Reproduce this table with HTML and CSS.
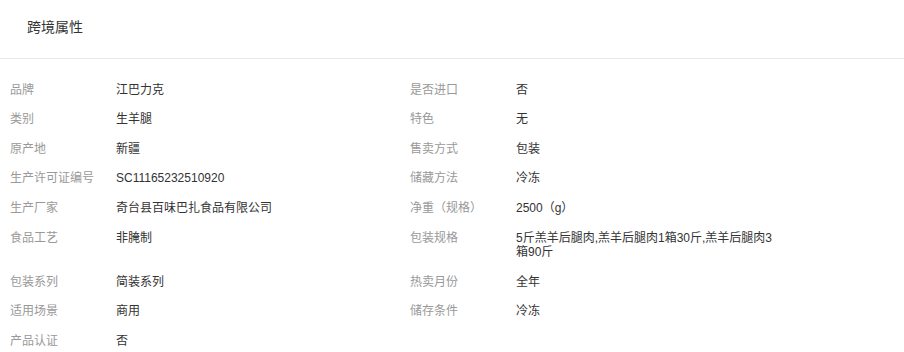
FILE: index.html
```html
<!DOCTYPE html>
<html lang="zh-CN">
<head>
    <meta charset="UTF-8">
    <meta name="viewport" content="width=device-width, initial-scale=1.0">
    <title>跨境属性</title>
    <link rel="stylesheet" href="styles.css">
</head>
<body>
    <div class="panel">
        <div class="panel-header">跨境属性</div>

        <div class="attr-list">
            <div class="attr-item"><span class="attr-label">品牌</span><span class="attr-value">江巴力克</span></div>
            <div class="attr-item"><span class="attr-label">是否进口</span><span class="attr-value">否</span></div>

            <div class="attr-item"><span class="attr-label">类别</span><span class="attr-value">生羊腿</span></div>
            <div class="attr-item"><span class="attr-label">特色</span><span class="attr-value">无</span></div>

            <div class="attr-item"><span class="attr-label">原产地</span><span class="attr-value">新疆</span></div>
            <div class="attr-item"><span class="attr-label">售卖方式</span><span class="attr-value">包装</span></div>

            <div class="attr-item"><span class="attr-label">生产许可证编号</span><span class="attr-value">SC11165232510920</span></div>
            <div class="attr-item"><span class="attr-label">储藏方法</span><span class="attr-value">冷冻</span></div>

            <div class="attr-item"><span class="attr-label">生产厂家</span><span class="attr-value">奇台县百味巴扎食品有限公司</span></div>
            <div class="attr-item"><span class="attr-label">净重（规格）</span><span class="attr-value">2500（g）</span></div>

            <div class="attr-item"><span class="attr-label">食品工艺</span><span class="attr-value">非腌制</span></div>
            <div class="attr-item"><span class="attr-label">包装规格</span><span class="attr-value">5斤羔羊后腿肉,羔羊后腿肉1箱30斤,羔羊后腿肉3箱90斤</span></div>

            <div class="attr-item"><span class="attr-label">包装系列</span><span class="attr-value">简装系列</span></div>
            <div class="attr-item"><span class="attr-label">热卖月份</span><span class="attr-value">全年</span></div>

            <div class="attr-item"><span class="attr-label">适用场景</span><span class="attr-value">商用</span></div>
            <div class="attr-item"><span class="attr-label">储存条件</span><span class="attr-value">冷冻</span></div>

            <div class="attr-item"><span class="attr-label">产品认证</span><span class="attr-value">否</span></div>
        </div>
    </div>
</body>
</html>
```

FILE: styles.css
```css
* {
    box-sizing: border-box;
    margin: 0;
    padding: 0;
}

body {
    font-family: 'Liberation Sans', Arial, 'Noto Sans CJK SC', sans-serif;
    background-color: #fff;
    color: #333;
}

.panel {
    width: 904px;
}

.panel-header {
    height: 59px;
    padding-left: 27px;
    font-size: 14px;
    line-height: 55px;
    color: #333;
    border-bottom: 1px solid #e8e8e8;
}

.attr-list {
    display: grid;
    grid-template-columns: 400px 400px;
    padding-top: 16px;
    font-size: 12px;
    line-height: 14.4px;
}

.attr-item {
    display: flex;
    padding: 7.6px 0 7.6px 10px;
}

.attr-label {
    width: 106px;
    flex-shrink: 0;
    color: #999;
}

.attr-value {
    width: 264px;
    color: #333;
    word-break: break-all;
}
```
